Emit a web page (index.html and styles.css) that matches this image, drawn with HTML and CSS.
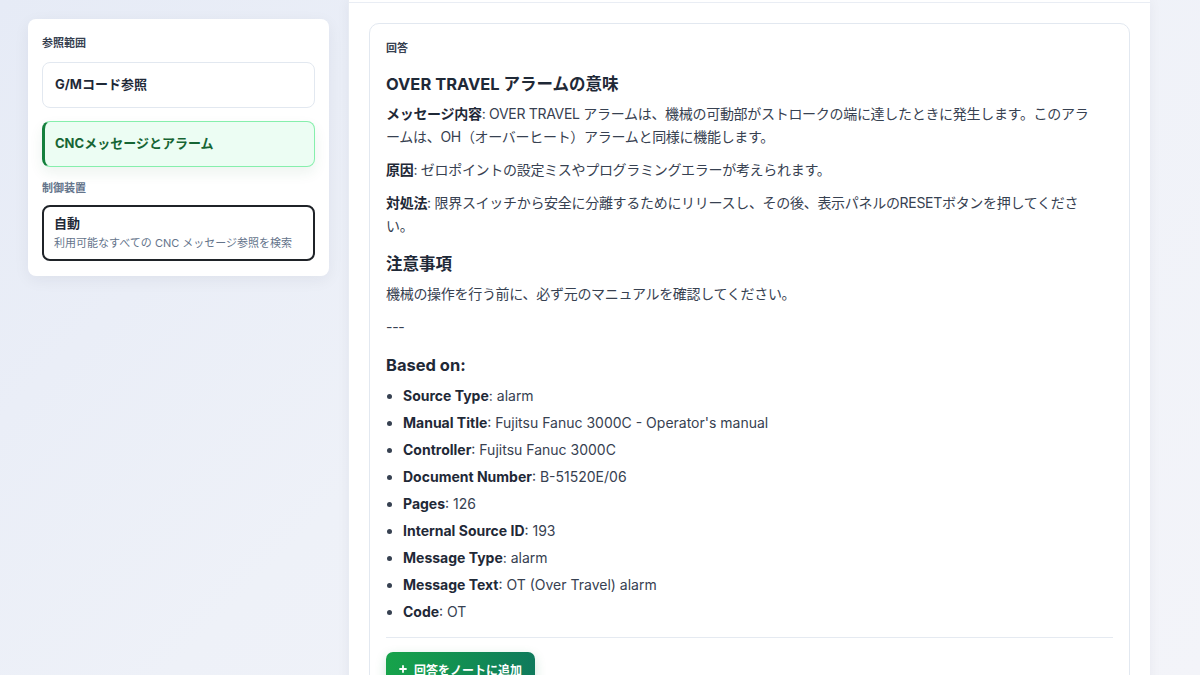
FILE: index.html
```html
<!DOCTYPE html>
<html lang="ja">
<head>
    <meta charset="UTF-8">
    <meta name="viewport" content="width=device-width, initial-scale=1.0">
    <title>CNC マニュアル検索</title>
    <link rel="stylesheet" href="styles.css">
</head>
<body>
    <div class="layout">
        <!-- 参照範囲・制御装置の選択 -->
        <aside class="sidebar">
            <div class="side-label">参照範囲</div>
            <button class="scope-btn">G/Mコード参照</button>
            <button class="scope-btn active">CNCメッセージとアラーム</button>

            <div class="side-label muted">制御装置</div>
            <div class="controller-select">
                <div class="controller-name">自動</div>
                <div class="controller-desc">利用可能なすべての CNC メッセージ参照を検索</div>
            </div>
        </aside>

        <main class="main-panel">
            <div class="panel-top"></div>

            <section class="answer-card">
                <div class="answer-label">回答</div>

                <div class="answer-body">
                    <h3>OVER TRAVEL アラームの意味</h3>
                    <p><strong>メッセージ内容</strong>: OVER TRAVEL アラームは、機械の可動部がストロークの端に達したときに発生します。このアラームは、OH（オーバーヒート）アラームと同様に機能します。</p>
                    <p><strong>原因</strong>: ゼロポイントの設定ミスやプログラミングエラーが考えられます。</p>
                    <p><strong>対処法</strong>: 限界スイッチから安全に分離するためにリリースし、その後、表示パネルのRESETボタンを押してください。</p>

                    <h3>注意事項</h3>
                    <p>機械の操作を行う前に、必ず元のマニュアルを確認してください。</p>
                    <p>---</p>

                    <h3 class="based-on">Based on:</h3>
                    <ul>
                        <li><strong>Source Type</strong>: alarm</li>
                        <li><strong>Manual Title</strong>: Fujitsu Fanuc 3000C - Operator's manual</li>
                        <li><strong>Controller</strong>: Fujitsu Fanuc 3000C</li>
                        <li><strong>Document Number</strong>: B-51520E/06</li>
                        <li><strong>Pages</strong>: 126</li>
                        <li><strong>Internal Source ID</strong>: 193</li>
                        <li><strong>Message Type</strong>: alarm</li>
                        <li><strong>Message Text</strong>: OT (Over Travel) alarm</li>
                        <li><strong>Code</strong>: OT</li>
                    </ul>
                </div>

                <div class="answer-actions">
                    <button class="note-btn">
                        <svg width="8" height="8" viewBox="0 0 8 8"><path d="M4 1v6M1 4h6" stroke="#fff" stroke-width="1.8" stroke-linecap="round"/></svg>
                        回答をノートに追加
                    </button>
                </div>
            </section>
        </main>
    </div>
</body>
</html>
```

FILE: styles.css
```css
* {
    margin: 0;
    padding: 0;
    box-sizing: border-box;
}

body {
    font-family: Inter, "Noto Sans CJK JP", sans-serif;
    color: #374151;
    background: linear-gradient(135deg, #e6ebf6 0%, #eef1f8 45%, #f3f4f9 100%);
    height: 675px;
    overflow: hidden;
}

.layout {
    display: grid;
    grid-template-columns: 301px 802px;
    column-gap: 19px;
    padding-left: 28px;
    align-items: start;
}

/* サイドバー */
.sidebar {
    margin-top: 19px;
    background: #fff;
    border-radius: 8px;
    padding: 16px 14px 15px;
    box-shadow: 0 4px 16px rgba(30, 41, 59, 0.06);
    display: flex;
    flex-direction: column;
}
.side-label {
    font-size: 11px;
    font-weight: 700;
    color: #374151;
    line-height: 16px;
    margin-bottom: 11px;
}
.side-label.muted {
    color: #64748b;
    margin-bottom: 9px;
}
.scope-btn {
    font-family: inherit;
    text-align: left;
    height: 46px;
    padding: 0 12px 3px;
    margin-bottom: 13px;
    background: #fff;
    border: 1px solid #e2e8f0;
    border-radius: 8px;
    font-size: 13px;
    font-weight: 700;
    color: #1f2937;
}
.scope-btn.active {
    background: #ecfdf3;
    border-color: #86efac;
    border-left: 3px solid #15803d;
    padding-left: 10px;
    color: #166534;
    box-shadow: 0 6px 14px rgba(22, 101, 52, 0.08);
    margin-bottom: 13px;
}
.controller-select {
    border: 2px solid #1f2328;
    border-radius: 8px;
    padding: 6px 10px 8px;
}
.controller-name {
    font-size: 13px;
    font-weight: 700;
    color: #1f2937;
    line-height: 20px;
    margin-bottom: 2px;
}
.controller-desc {
    font-size: 11px;
    color: #64748b;
    line-height: 16px;
}

/* メインパネル */
.main-panel {
    background: #fff;
    min-height: 720px;
    padding: 0 20px;
    border-left: 1px solid #e8ecf3;
    box-shadow: 0 0 12px rgba(30, 41, 59, 0.05);
}
.panel-top {
    height: 3px;
    border-bottom: 1px solid #e9edf4;
    margin: 0 -20px 20px;
}

.answer-card {
    border: 1px solid #e2e8f0;
    border-radius: 10px;
    padding: 16px 16px 0;
    min-height: 680px;
}
.answer-label {
    font-size: 11px;
    font-weight: 700;
    color: #374151;
    line-height: 16px;
    margin-bottom: 16px;
}

.answer-body h3 {
    font-size: 16.5px;
    font-weight: 700;
    color: #1f2937;
    line-height: 24px;
    margin-bottom: 6px;
}
.answer-body h3.based-on {
    margin-bottom: 7px;
}
.answer-body p {
    font-size: 14px;
    line-height: 23px;
    letter-spacing: -0.3px;
    margin-bottom: 10px;
    padding-right: 18px;
}
.answer-body p + h3 {
    margin-top: 15px;
}
.answer-body strong {
    color: #1f2937;
    font-weight: 700;
}
.answer-body ul {
    padding-left: 17px;
    font-size: 14px;
}
.answer-body li {
    line-height: 23px;
    margin-bottom: 4px;
}

.answer-actions {
    border-top: 1px solid #e5eaf1;
    margin-top: 14px;
    padding-top: 14px;
}
.note-btn {
    font-family: inherit;
    display: inline-flex;
    align-items: center;
    gap: 7px;
    height: 34px;
    padding: 0 13px;
    border: none;
    border-radius: 7px;
    background: linear-gradient(90deg, #16a34a, #0f7a5c);
    color: #fff;
    font-size: 12px;
    font-weight: 700;
    box-shadow: 0 4px 12px rgba(22, 128, 74, 0.2);
}
```
